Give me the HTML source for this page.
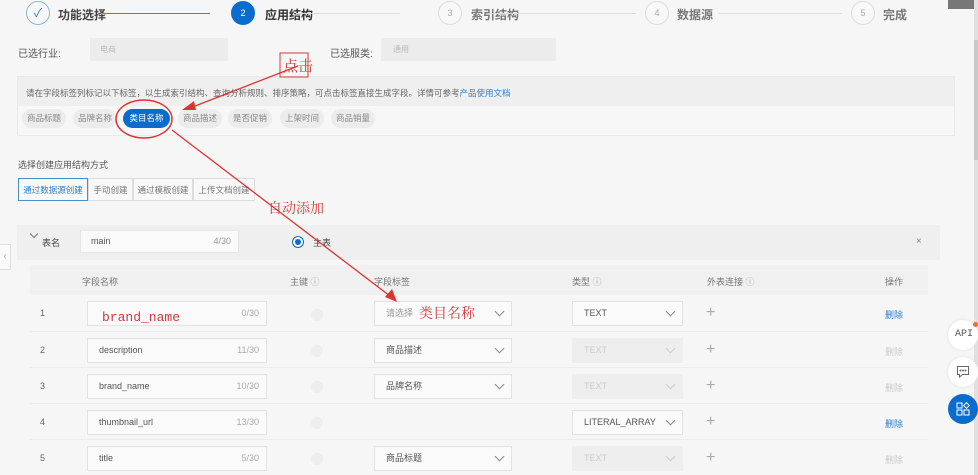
<!DOCTYPE html>
<html><head><meta charset="utf-8"><style>
*{margin:0;padding:0;box-sizing:border-box}
body{width:978px;height:475px;overflow:hidden;background:#f6f6f6;font-family:"Liberation Sans","Noto Sans CJK SC",sans-serif;position:relative;color:#555;font-size:10px}
.a{position:absolute}
.circ{position:absolute;width:24px;height:24px;border-radius:50%;border:1px solid #ddd;background:#f8f8f8;color:#aaa;font-size:9px;text-align:center;line-height:22px}
.st{position:absolute;font-size:12px;color:#777;font-weight:bold}
.ln{position:absolute;height:1px;background:#ddd;top:13px}
.chip{position:absolute;top:109px;height:19px;line-height:19px;border-radius:10px;background:#ececec;color:#888;font-size:8.5px;width:44px;text-align:center}
.tab{position:absolute;top:178px;height:23px;line-height:23px;border:1px solid #ddd;background:#f8f8f8;font-size:8.5px;color:#777;text-align:center}
.inp{position:absolute;left:87px;width:180px;height:25px;border:1px solid #e2e2e2;background:#fafafa;font-size:9px;color:#555;line-height:23px;padding-left:11px}
.inp span{position:absolute;right:7px;color:#aaa}
.sel{position:absolute;height:25px;border:1px solid #e2e2e2;background:#fafafa;font-size:9px;color:#555;line-height:23px;padding-left:11px}
.sel.dis{background:#eeeeee;border-color:#eee;color:#ccc}
.sel i{position:absolute;right:8px;top:6px;width:7px;height:7px;border-right:1px solid #888;border-bottom:1px solid #888;transform:rotate(45deg)}
.num{position:absolute;left:40px;font-size:9px;color:#666}
.pk{position:absolute;left:311px;width:12px;height:12px;border-radius:50%;background:#eee}
.plus{position:absolute;left:706px;font-size:16px;color:#aaa;font-weight:300;line-height:16px}
.del{position:absolute;left:885px;font-size:9px;color:#ccc}
.del.on{color:#2a7fcf}
.rowline{position:absolute;left:30px;width:898px;height:1px;background:#ececec}
.rc{color:#cf3a3a;font-family:"Liberation Serif","Noto Serif CJK SC",serif}
</style></head><body>
<div class="a" style="left:974px;top:0;width:4px;height:475px;background:#e0e0e0"></div>
<div class="a" style="left:974px;top:40px;width:4px;height:120px;background:#c8c8c8"></div>
<!-- steps -->
<div class="circ" style="left:26px;top:1px;border-color:#8fb2d6;color:#2a7fcf;font-size:12px">✓</div>
<div class="st" style="left:58px;top:6px;color:#444">功能选择</div>
<div class="ln" style="left:103px;width:107px;background:#4a86c0"></div>
<div class="circ" style="left:231px;top:1px;background:#0a6ccc;border-color:#0a6ccc;color:#fff">2</div>
<div class="st" style="left:265px;top:6px;color:#333">应用结构</div>
<div class="ln" style="left:296px;width:104px"></div>
<div class="circ" style="left:438px;top:1px">3</div>
<div class="st" style="left:471px;top:6px">索引结构</div>
<div class="ln" style="left:490px;width:146px"></div>
<div class="circ" style="left:645px;top:1px">4</div>
<div class="st" style="left:677px;top:6px">数据源</div>
<div class="ln" style="left:718px;width:124px"></div>
<div class="circ" style="left:851px;top:1px">5</div>
<div class="st" style="left:883px;top:6px">完成</div>
<div class="a" style="left:948px;top:0;width:26px;height:9px;background:#777"></div>
<!-- industry -->
<div class="a" style="left:18px;top:45px;font-size:10px;color:#555">已选行业:</div>
<div class="a" style="left:90px;top:38px;width:138px;height:23px;background:#ececec;color:#bbb;font-size:8px;padding:6px 10px">电商</div>
<div class="a" style="left:330px;top:45px;font-size:10px;color:#555">已选服类:</div>
<div class="a" style="left:381px;top:38px;width:175px;height:23px;background:#ececec;color:#bbb;font-size:8px;padding:6px 12px">通用</div>
<!-- info -->
<div class="a" style="left:17px;top:76px;width:938px;height:60px;border:1px solid #eaeaea;background:#f7f7f7"></div>
<div class="a" style="left:18px;top:77px;width:936px;height:29px;background:#efefef"></div>
<div class="a" style="left:26px;top:87px;font-size:8.5px;color:#666;white-space:nowrap">请在字段标签列标记以下标签，以生成索引结构、查询分析规则、排序策略，可点击标签直接生成字段。详情可参考<span style="color:#2a7fcf">产品使用文档</span></div>
<div class="chip" style="left:22px">商品标题</div>
<div class="chip" style="left:73px">品牌名称</div>
<div class="chip" style="left:123px;width:47px;background:#0a6ccc;color:#fff">类目名称</div>
<div class="chip" style="left:178px">商品描述</div>
<div class="chip" style="left:228px">是否促销</div>
<div class="chip" style="left:280px">上架时间</div>
<div class="chip" style="left:331px">商品销量</div>
<!-- create way -->
<div class="a" style="left:18px;top:158px;font-size:9px;color:#555">选择创建应用结构方式</div>
<div class="tab" style="left:18px;width:70px;border-color:#4b8ec6;color:#2a7fcf">通过数据源创建</div>
<div class="tab" style="left:88px;width:45px">手动创建</div>
<div class="tab" style="left:133px;width:60px">通过模板创建</div>
<div class="tab" style="left:193px;width:62px">上传文档创建</div>
<!-- table group -->
<div class="a" style="left:17px;top:225px;width:923px;height:35px;background:#efefef"></div>
<div class="a" style="left:31px;top:231px;width:6px;height:6px;border-right:1px solid #777;border-bottom:1px solid #777;transform:rotate(45deg)"></div>
<div class="a" style="left:42px;top:236px;font-size:9px;color:#444">表名</div>
<div class="a" style="left:80px;top:230px;width:159px;height:23px;background:#fafafa;border:1px solid #e6e6e6;font-size:9px;line-height:21px;padding-left:10px;color:#555">main<span style="position:absolute;right:7px;color:#999">4/30</span></div>
<div class="a" style="left:292px;top:236px;width:12px;height:12px;border-radius:50%;border:1px solid #0a6ccc;background:#fff"></div>
<div class="a" style="left:295px;top:239px;width:6px;height:6px;border-radius:50%;background:#0a6ccc"></div>
<div class="a" style="left:313px;top:236px;font-size:9px;color:#444">主表</div>
<div class="a" style="left:916px;top:236px;font-size:10px;color:#888">×</div>
<!-- header -->
<div class="a" style="left:30px;top:265px;width:898px;height:30px;background:#f0f0f0"></div>
<div class="a" style="left:82px;top:275px;font-size:9px;color:#777">字段名称</div>
<div class="a" style="left:290px;top:275px;font-size:9px;color:#777">主键 <span style="color:#aaa">ⓘ</span></div>
<div class="a" style="left:374px;top:275px;font-size:9px;color:#777">字段标签</div>
<div class="a" style="left:572px;top:275px;font-size:9px;color:#777">类型 <span style="color:#aaa">ⓘ</span></div>
<div class="a" style="left:707px;top:275px;font-size:9px;color:#777">外表连接 <span style="color:#aaa">ⓘ</span></div>
<div class="a" style="left:885px;top:275px;font-size:9px;color:#777">操作</div>
<!-- rows -->
<div class="num" style="top:308px">1</div>
<div class="inp" style="top:301px"><span>0/30</span></div>
<div class="pk" style="top:309px"></div>
<div class="sel" style="left:374px;top:301px;width:138px;color:#999">请选择<i></i></div>
<div class="sel" style="left:572px;top:301px;width:111px">TEXT<i></i></div>
<div class="plus" style="top:305px">+</div>
<div class="del on" style="top:308px">删除</div>
<div class="rowline" style="top:331px"></div>

<div class="num" style="top:345px">2</div>
<div class="inp" style="top:338px">description<span>11/30</span></div>
<div class="pk" style="top:345px"></div>
<div class="sel" style="left:374px;top:338px;width:138px">商品描述<i></i></div>
<div class="sel dis" style="left:572px;top:338px;width:111px">TEXT<i style="border-color:#ccc"></i></div>
<div class="plus" style="top:342px">+</div>
<div class="del" style="top:345px">删除</div>
<div class="rowline" style="top:367px"></div>

<div class="num" style="top:381px">3</div>
<div class="inp" style="top:374px">brand_name<span>10/30</span></div>
<div class="pk" style="top:381px"></div>
<div class="sel" style="left:374px;top:374px;width:138px">品牌名称<i></i></div>
<div class="sel dis" style="left:572px;top:374px;width:111px">TEXT<i style="border-color:#ccc"></i></div>
<div class="plus" style="top:378px">+</div>
<div class="del" style="top:381px">删除</div>
<div class="rowline" style="top:403px"></div>

<div class="num" style="top:417px">4</div>
<div class="inp" style="top:410px">thumbnail_url<span>13/30</span></div>
<div class="pk" style="top:417px"></div>
<div class="sel" style="left:572px;top:410px;width:111px">LITERAL_ARRAY<i></i></div>
<div class="plus" style="top:414px">+</div>
<div class="del on" style="top:417px">删除</div>
<div class="rowline" style="top:439px"></div>

<div class="num" style="top:453px">5</div>
<div class="inp" style="top:446px">title<span>5/30</span></div>
<div class="pk" style="top:453px"></div>
<div class="sel" style="left:374px;top:446px;width:138px">商品标题<i></i></div>
<div class="sel dis" style="left:572px;top:446px;width:111px">TEXT<i style="border-color:#ccc"></i></div>
<div class="plus" style="top:450px">+</div>
<div class="del" style="top:453px">删除</div>

<!-- left tab -->
<div class="a" style="left:0;top:244px;width:11px;height:26px;background:#fafafa;border:1px solid #ddd;border-left:none;color:#aaa;font-size:10px;line-height:24px;text-align:center">‹</div>
<!-- right float -->
<div class="a" style="left:948px;top:320px;width:30px;height:30px;border-radius:50%;background:#fff;box-shadow:0 0 3px #ddd;font-size:10px;line-height:30px;padding-left:7px;color:#555;font-family:'Liberation Mono',monospace">API</div>
<div class="a" style="left:973px;top:322px;width:5px;height:5px;border-radius:50%;background:#f07020"></div>
<div class="a" style="left:948px;top:357px;width:30px;height:30px;border-radius:50%;background:#fff;box-shadow:0 0 3px #ddd"></div>
<svg class="a" style="left:956px;top:365px" width="14" height="13" viewBox="0 0 14 13" fill="none" stroke="#666" stroke-width="1"><path d="M1.5 1.5h11v8h-6l-3 2.5v-2.5h-2z"/><circle cx="4.5" cy="5.5" r=".5" fill="#666"/><circle cx="7" cy="5.5" r=".5" fill="#666"/><circle cx="9.5" cy="5.5" r=".5" fill="#666"/></svg>
<div class="a" style="left:948px;top:394px;width:30px;height:30px;border-radius:50%;background:#0a6ccc"></div>
<svg class="a" style="left:956px;top:402px" width="14" height="14" viewBox="0 0 14 14" fill="none" stroke="#fff" stroke-width="1"><rect x="1" y="1" width="5" height="5"/><rect x="1" y="8" width="5" height="5"/><rect x="8" y="8" width="5" height="5"/><rect x="8.5" y="1.5" width="4" height="4" transform="rotate(45 10.5 3.5)"/></svg>

<!-- annotations -->
<svg class="a" style="left:0;top:0" width="978" height="475">
<g stroke="#d33" stroke-width="1.3" fill="none">
<rect x="280" y="53" width="28" height="24" stroke-width="1"/>
<line x1="298" y1="66" x2="190" y2="108"/>
<ellipse cx="144" cy="119" rx="28" ry="19" stroke-width="1.5"/>
<line x1="172" y1="130" x2="390" y2="296"/>
</g>
<polygon points="182,110 194,101 196,110" fill="#d33"/>
<polygon points="397,302 385,297 392,289" fill="#d33"/>
</svg>
<div class="a rc" style="left:283px;top:55px;font-size:15px">点击</div>
<div class="a rc" style="left:268px;top:198px;font-size:14px">自动添加</div>
<div class="a rc" style="left:102px;top:310px;font-size:13px;font-family:'Liberation Mono',monospace">brand_name</div>
<div class="a rc" style="left:419px;top:303px;font-size:14px">类目名称</div>
</body></html>
